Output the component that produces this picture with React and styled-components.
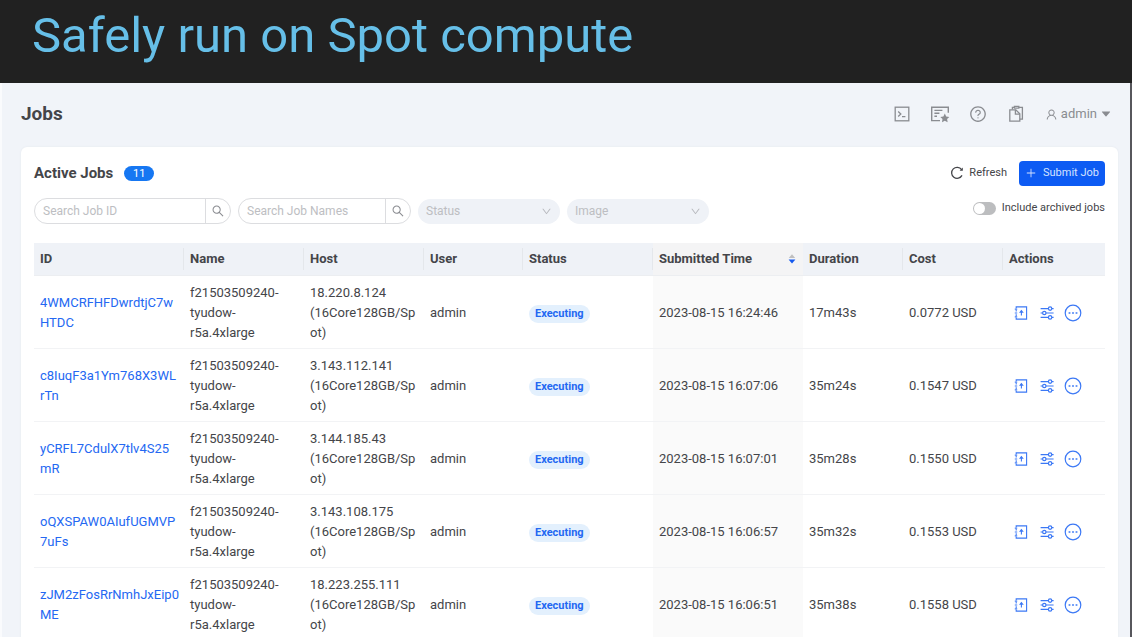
import React, { useState } from 'react';
import styled, { createGlobalStyle } from 'styled-components';
import {
  AiOutlineSearch,
  AiOutlineDown,
  AiOutlinePlus,
  AiOutlineQuestionCircle,
  AiOutlineUser,
  AiFillCaretDown,
} from 'react-icons/ai';

const name = 'f21503509240-\ntyudow-\nr5a.4xlarge';

const jobs = [
  { id: '4WMCRFHFDwrdtjC7w\nHTDC', host: '18.220.8.124', time: '2023-08-15 16:24:46', duration: '17m43s', cost: '0.0772 USD' },
  { id: 'c8IuqF3a1Ym768X3WL\nrTn', host: '3.143.112.141', time: '2023-08-15 16:07:06', duration: '35m24s', cost: '0.1547 USD' },
  { id: 'yCRFL7CdulX7tlv4S25\nmR', host: '3.144.185.43', time: '2023-08-15 16:07:01', duration: '35m28s', cost: '0.1550 USD' },
  { id: 'oQXSPAW0AIufUGMVP\n7uFs', host: '3.143.108.175', time: '2023-08-15 16:06:57', duration: '35m32s', cost: '0.1553 USD' },
  { id: 'zJM2zFosRrNmhJxEip0\nME', host: '18.223.255.111', time: '2023-08-15 16:06:51', duration: '35m38s', cost: '0.1558 USD' },
];

const TerminalIcon = () => (
  <svg width="16" height="16" viewBox="0 0 16 16" fill="none" stroke="currentColor" strokeWidth="1.3">
    <rect x="1.2" y="1.2" width="13.6" height="13.6" />
    <path d="M4.2 5.6 6.8 8l-2.6 2.4M8 10.6h3.4" />
  </svg>
);

const LicenseIcon = () => (
  <svg width="20" height="18" viewBox="0 0 20 18" fill="none" stroke="currentColor" strokeWidth="1.4">
    <path d="M10 15.6H1.7V2.2h16.6v5.6" />
    <path d="M4.4 5.4h8M4.4 8.3h5M4.4 11.2h2.6" />
    <path
      fill="currentColor"
      stroke="none"
      d="m14.8 8.6 1.4 2.9 3.1.4-2.2 2.2.5 3.1-2.8-1.5-2.8 1.5.5-3.1-2.2-2.2 3.1-.4z"
    />
  </svg>
);

const CopyIcon = () => (
  <svg width="16" height="18" viewBox="0 0 16 18" fill="none" stroke="currentColor" strokeWidth="1.3">
    <path d="M4.4 4.6V2.4h1.8M10.8 2.4h3.6v11.8h-2.6" />
    <path d="M6.4 1.4h4.4v1.8H6.4z" />
    <path d="M1.8 4.8h6l4 4v7.4h-10z" />
    <path d="M7.4 4.8v4.4h4.4" />
  </svg>
);

const RefreshIcon = () => (
  <svg width="14" height="14" viewBox="0 0 14 14" fill="none" stroke="currentColor" strokeWidth="1.3">
    <path d="M11.6 3.6A5.5 5.5 0 1 0 12 9.4" />
    <path d="M12.8 1.6v3.2H9.6z" fill="currentColor" stroke="none" />
  </svg>
);

const SorterIcon = () => (
  <svg width="8" height="10" viewBox="0 0 8 10">
    <path d="M4 .2 7.2 4H.8z" fill="#bfbfbf" />
    <path d="M.6 5.6h6.8L4 9.6z" fill="#155aef" />
  </svg>
);

const LogIcon = () => (
  <svg width="14" height="14" viewBox="0 0 14 14" fill="none" stroke="currentColor" strokeWidth="1.1">
    <path d="M2.2 2.2V.9h10.4v12.2H2.2v-1.3M2.2 4v1.6M2.2 8.2V10" />
    <path d="M.8 3.1h2.4M.8 7h2.4M.8 10.9h2.4" />
    <path d="M7.4 9.6V5.8" />
    <path d="M7.4 3.8 9.8 6.8H5z" fill="currentColor" stroke="none" />
  </svg>
);

const SlidersIcon = () => (
  <svg width="14" height="14" viewBox="0 0 14 14" fill="none" stroke="currentColor" strokeWidth="1.2">
    <path d="M.6 2.6h7.8M11.8 2.6h1.8M.6 7h2M6 7h7.6M.6 11.4h7.8M11.8 11.4h1.8" />
    <circle cx="10.1" cy="2.6" r="1.7" />
    <circle cx="4.3" cy="7" r="1.7" />
    <circle cx="10.1" cy="11.4" r="1.7" />
  </svg>
);

const MoreIcon = () => (
  <svg width="18" height="18" viewBox="0 0 18 18" fill="none" stroke="currentColor" strokeWidth="1.2">
    <circle cx="9" cy="9" r="7.8" />
    <path d="M4.6 9h1.8M8.1 9h1.8M11.6 9h1.8" strokeWidth="1.6" />
  </svg>
);

const App = () => {
  const [archived, setArchived] = useState(false);

  return (
    <>
      <GlobalStyle />
      <Banner>
        <BannerTitle>Safely run on Spot compute</BannerTitle>
      </Banner>
      <Page>
        <TopBar>
          <PageTitle>Jobs</PageTitle>
          <TopActions>
            <IconButton aria-label="Terminal"><TerminalIcon /></IconButton>
            <IconButton aria-label="License"><LicenseIcon /></IconButton>
            <IconButton aria-label="Help"><AiOutlineQuestionCircle size={18} /></IconButton>
            <IconButton aria-label="Documents"><CopyIcon /></IconButton>
            <UserButton>
              <AiOutlineUser size={13} />
              admin
              <AiFillCaretDown size={12} />
            </UserButton>
          </TopActions>
        </TopBar>
        <Card>
          <CardHead>
            <CardTitle>Active Jobs</CardTitle>
            <Count>11</Count>
            <HeadActions>
              <RefreshButton><RefreshIcon />Refresh</RefreshButton>
              <SubmitButton><AiOutlinePlus size={12} />Submit Job</SubmitButton>
            </HeadActions>
          </CardHead>
          <Filters>
            <Search $width={197}>
              <SearchInput aria-label="Search Job ID" placeholder="Search Job ID" />
              <SearchButton aria-label="Search by ID"><AiOutlineSearch size={14} /></SearchButton>
            </Search>
            <Search $width={173}>
              <SearchInput aria-label="Search Job Names" placeholder="Search Job Names" />
              <SearchButton aria-label="Search by name"><AiOutlineSearch size={14} /></SearchButton>
            </Search>
            <SelectBox>
              <Select aria-label="Status" disabled><option>Status</option></Select>
              <AiOutlineDown size={11} />
            </SelectBox>
            <SelectBox>
              <Select aria-label="Image" disabled><option>Image</option></Select>
              <AiOutlineDown size={11} />
            </SelectBox>
            <SwitchLabel>
              <Switch type="checkbox" checked={archived} onChange={() => setArchived(!archived)} />
              Include archived jobs
            </SwitchLabel>
          </Filters>
          <Table>
            <colgroup>
              <Col $width={150} />
              <Col $width={120} />
              <Col $width={120} />
              <Col $width={99} />
              <Col $width={130} />
              <Col $width={150} />
              <Col $width={100} />
              <Col $width={100} />
              <col />
            </colgroup>
            <thead>
              <tr>
                <Th>ID</Th>
                <Th>Name</Th>
                <Th>Host</Th>
                <Th>User</Th>
                <Th>Status</Th>
                <Th $sorted>
                  <Sorter>Submitted Time<SorterIcon /></Sorter>
                </Th>
                <Th>Duration</Th>
                <Th>Cost</Th>
                <Th>Actions</Th>
              </tr>
            </thead>
            <tbody>
              {jobs.map(job => (
                <tr key={job.id}>
                  <Td><JobLink href="#">{job.id}</JobLink></Td>
                  <Td>{name}</Td>
                  <Td>{job.host + '\n(16Core128GB/Sp\not)'}</Td>
                  <Td>admin</Td>
                  <Td><Tag>Executing</Tag></Td>
                  <Td $sorted>{job.time}</Td>
                  <Td>{job.duration}</Td>
                  <Td>{job.cost}</Td>
                  <Td>
                    <RowActions>
                      <RowButton aria-label="Logs"><LogIcon /></RowButton>
                      <RowButton aria-label="Settings"><SlidersIcon /></RowButton>
                      <RowButton aria-label="More"><MoreIcon /></RowButton>
                    </RowActions>
                  </Td>
                </tr>
              ))}
            </tbody>
          </Table>
        </Card>
      </Page>
    </>
  );
};

const GlobalStyle = createGlobalStyle`
* {
  box-sizing: border-box;
}
html {
  scrollbar-width: none;
}
body {
  margin: 0;
  background: #f1f4f9;
  color: #444549;
  font-family: Roboto, "Liberation Sans", sans-serif;
  font-size: 13px;
  line-height: 20px;
}
button, input, select {
  margin: 0;
  padding: 0;
  border: 0;
  background: none;
  color: inherit;
  font: inherit;
}
svg {
  display: block;
  flex: none;
}
`;

const Banner = styled.header`
display: flex;
align-items: center;
height: 83px;
padding: 0 32px 12px;
background: #212121;
`;

const BannerTitle = styled.h1`
margin: 0;
color: #66bfe8;
font-size: 49px;
font-weight: 400;
line-height: 60px;
white-space: nowrap;
`;

const Page = styled.main`
padding: 11px 12px 0 19px;
border-left: 2px solid #fafbfd;
border-right: 2px solid #57575c;
`;

const TopBar = styled.div`
display: flex;
align-items: center;
justify-content: space-between;
height: 40px;
margin-bottom: 13px;
`;

const PageTitle = styled.h2`
margin: 0;
font-size: 19px;
font-weight: 700;
`;

const TopActions = styled.div`
display: flex;
align-items: center;
gap: 20px;
padding-right: 6px;
color: #8a8c91;
`;

const IconButton = styled.button`
display: flex;
justify-content: center;
width: 18px;
`;

const UserButton = styled.button`
display: flex;
align-items: center;
gap: 3px;
font-size: 13px;
`;

const Card = styled.section`
padding: 13px 13px 0;
border-radius: 6px 6px 0 0;
background: #fff;
box-shadow: 0 0 2px #e2e6ec;
`;

const CardHead = styled.div`
display: flex;
align-items: center;
height: 26px;
margin-bottom: 12px;
`;

const CardTitle = styled.h3`
margin: 0;
font-size: 15px;
font-weight: 700;
`;

const Count = styled.span`
width: 30px;
margin-left: 11px;
border-radius: 8px;
background: #1677f2;
color: #fff;
font-size: 11px;
line-height: 15px;
text-align: center;
`;

const HeadActions = styled.div`
display: flex;
align-items: center;
gap: 12px;
margin-left: auto;
font-size: 11px;
`;

const RefreshButton = styled.button`
display: flex;
align-items: center;
gap: 5px;
`;

const SubmitButton = styled.button`
display: flex;
align-items: center;
justify-content: center;
gap: 6px;
width: 86px;
height: 25px;
border-radius: 4px;
background: #0d5bf3;
color: #d5e3ff;
`;

const Filters = styled.div`
display: flex;
align-items: center;
gap: 7px;
margin-bottom: 19px;
font-size: 12px;
`;

const Search = styled.div`
display: flex;
width: ${props => props.$width}px;
height: 26px;
border: 1px solid #dcdde0;
border-radius: 13px;
`;

const SearchInput = styled.input`
flex: 1;
min-width: 0;
padding-left: 8px;
outline: none;

&::placeholder {
  color: #bdbec2;
}
`;

const SearchButton = styled.button`
display: flex;
align-items: center;
justify-content: center;
width: 25px;
border-left: 1px solid #dcdde0;
color: #8a8c91;
`;

const SelectBox = styled.div`
display: flex;
align-items: center;
width: 142px;
height: 25px;
padding: 0 8px;
border-radius: 13px;
background: #eff2f7;
color: #b7b9be;
`;

const Select = styled.select`
flex: 1;
appearance: none;
opacity: 1;
color: #bdbec2;
`;

const SwitchLabel = styled.label`
display: flex;
align-items: center;
gap: 6px;
height: 20px;
margin: 0 0 6px auto;
font-size: 11px;
`;

const Switch = styled.input`
display: flex;
align-items: center;
appearance: none;
width: 23px;
height: 13px;
padding: 1px;
border-radius: 7px;
background: ${props => (props.checked ? '#0d5bf3' : '#bcbdbf')};

&::before {
  content: '';
  width: 11px;
  height: 11px;
  margin-left: ${props => (props.checked ? 'auto' : '0')};
  border-radius: 50%;
  background: #fff;
}
`;

const Table = styled.table`
width: 100%;
table-layout: fixed;
border-collapse: separate;
border-spacing: 0;
`;

const Col = styled.col`
width: ${props => props.$width}px;
`;

const Th = styled.th`
height: 33px;
padding: 0;
border-bottom: 1px solid #eceef1;
background: ${props => (props.$sorted ? '#f4f4f5' : '#eff2f7')};
font-size: 13px;
font-weight: 700;
text-align: left;
text-indent: 6px;

&:not(:last-child) {
  background-image: linear-gradient(#e4e7eb, #e4e7eb);
  background-position: right center;
  background-repeat: no-repeat;
  background-size: ${props => (props.$sorted ? '0' : '1px')} 22px;
}
`;

const Sorter = styled.div`
display: flex;
align-items: center;
justify-content: space-between;
padding-right: 7px;
`;

const Td = styled.td`
height: 73px;
padding: 7px 6px 5px;
border-bottom: 1px solid #f2f3f5;
background: ${props => (props.$sorted ? '#fafafa' : '#fff')};
white-space: pre;
`;

const JobLink = styled.a`
color: #2468f2;
text-decoration: none;
`;

const Tag = styled.span`
display: inline-block;
padding: 0 6px;
border-radius: 9px;
background: #e3f0fd;
color: #2468f2;
font-size: 11px;
font-weight: 700;
line-height: 18px;
`;

const RowActions = styled.div`
display: flex;
align-items: center;
gap: 8px;
padding-left: 3px;
color: #3b78f5;
`;

const RowButton = styled.button`
display: flex;
justify-content: center;
width: 18px;
`;

export default App;
